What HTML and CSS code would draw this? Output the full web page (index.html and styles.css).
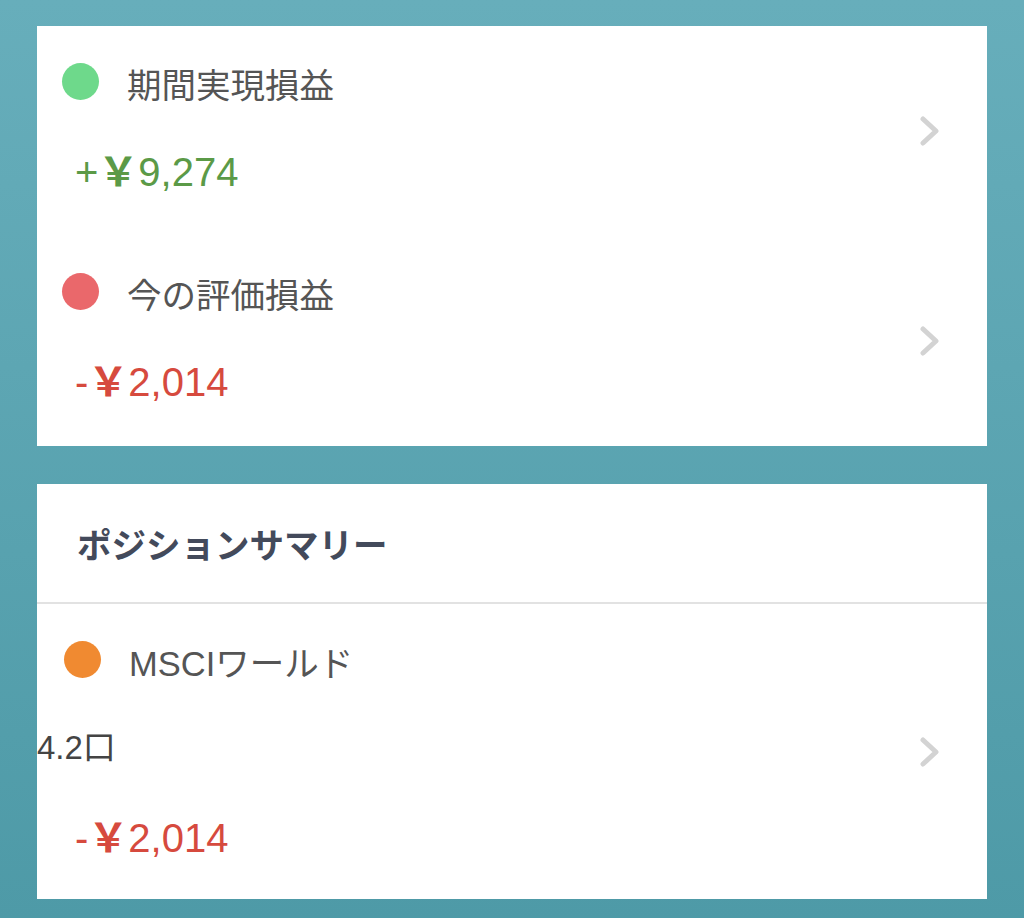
FILE: index.html
```html
<!DOCTYPE html>
<html lang="ja">
<head>
  <meta charset="UTF-8" />
  <meta name="viewport" content="width=device-width, initial-scale=1.0" />
  <title>損益サマリー</title>
  <link rel="stylesheet" href="styles.css">
</head>
<body>
  <main class="page">
    <section class="card">
      <a class="row" href="#">
        <div class="row-body">
          <div class="row-title">
            <span class="dot dot-green"></span>
            <span class="label">期間実現損益</span>
          </div>
          <div class="amount amount-plus">+<span class="yen">￥</span>9,274</div>
        </div>
        <svg class="chevron" viewBox="0 0 20 30" width="20" height="30">
          <path d="M3 3 L16 15 L3 27" />
        </svg>
      </a>
      <a class="row" href="#">
        <div class="row-body">
          <div class="row-title">
            <span class="dot dot-red"></span>
            <span class="label">今の評価損益</span>
          </div>
          <div class="amount amount-minus">-<span class="yen">￥</span>2,014</div>
        </div>
        <svg class="chevron" viewBox="0 0 20 30" width="20" height="30">
          <path d="M3 3 L16 15 L3 27" />
        </svg>
      </a>
    </section>

    <section class="card">
      <h2 class="card-head">ポジションサマリー</h2>
      <a class="row row-position" href="#">
        <div class="row-body">
          <div class="row-title">
            <span class="dot dot-orange"></span>
            <span class="label">MSCIワールド</span>
          </div>
          <div class="units">4.2口</div>
          <div class="amount amount-minus">-<span class="yen">￥</span>2,014</div>
        </div>
        <svg class="chevron" viewBox="0 0 20 30" width="20" height="30">
          <path d="M3 3 L16 15 L3 27" />
        </svg>
      </a>
    </section>
  </main>
</body>
</html>
```

FILE: styles.css
```css
:root {
  --bg-top: #67aebb;
  --bg-bottom: #4e9aa7;
  --card-bg: #fff;
  --label-color: #555;
  --head-color: #434a5b;
  --plus-color: #5b9a47;
  --minus-color: #d64a3e;
  --chevron-color: #d3d3d3;
}

body {
  margin: 0;
  height: 918px;
  overflow: hidden;
  font-family: "Liberation Sans", "Noto Sans CJK JP", sans-serif;
  background: linear-gradient(to bottom, var(--bg-top), var(--bg-bottom));
}

.page {
  padding: 26px 37px 0 37px;
  display: flex;
  flex-direction: column;
  gap: 38px;
}

.card {
  background-color: var(--card-bg);
}

.row {
  display: flex;
  align-items: center;
  justify-content: space-between;
  height: 210px;
  padding-right: 47px;
  color: inherit;
  text-decoration: none;
}

.row-body {
  align-self: flex-start;
  display: flex;
  flex-direction: column;
  padding-top: 37px;
}

.row-title {
  display: flex;
  align-items: center;
  gap: 28px;
  padding-left: 25px;
  height: 37px;
}

.dot {
  width: 37px;
  height: 37px;
  border-radius: 50%;
  flex-shrink: 0;
}
.dot-green { background-color: #6ed98b; }
.dot-red { background-color: #ea686b; }
.dot-orange { background-color: #f08a31; }

.label {
  font-size: 34.5px;
  line-height: 37px;
  color: var(--label-color);
  position: relative;
  top: 5px;
}

.amount {
  font-size: 40px;
  line-height: 40px;
  margin-top: 52px;
  padding-left: 38px;
}
.amount .yen {
  font-weight: bold;
}
.amount-plus { color: var(--plus-color); }
.amount-minus { color: var(--minus-color); }

.chevron {
  flex-shrink: 0;
}
.chevron path {
  fill: none;
  stroke: var(--chevron-color);
  stroke-width: 5;
  stroke-linecap: round;
  stroke-linejoin: round;
}

.card-head {
  margin: 0;
  height: 118px;
  padding-left: 40px;
  display: flex;
  align-items: center;
  font-size: 34.5px;
  font-weight: bold;
  color: var(--head-color);
  border-bottom: 2px solid #e2e2e2;
}

.row-position {
  height: 295px;
}
.row-position .row-body {
  padding-top: 37px;
}
.row-position .row-title {
  padding-left: 27px;
}
.units {
  font-size: 33px;
  line-height: 36px;
  margin-top: 52px;
  color: #444;
}
.row-position .amount {
  margin-top: 52px;
}
```
